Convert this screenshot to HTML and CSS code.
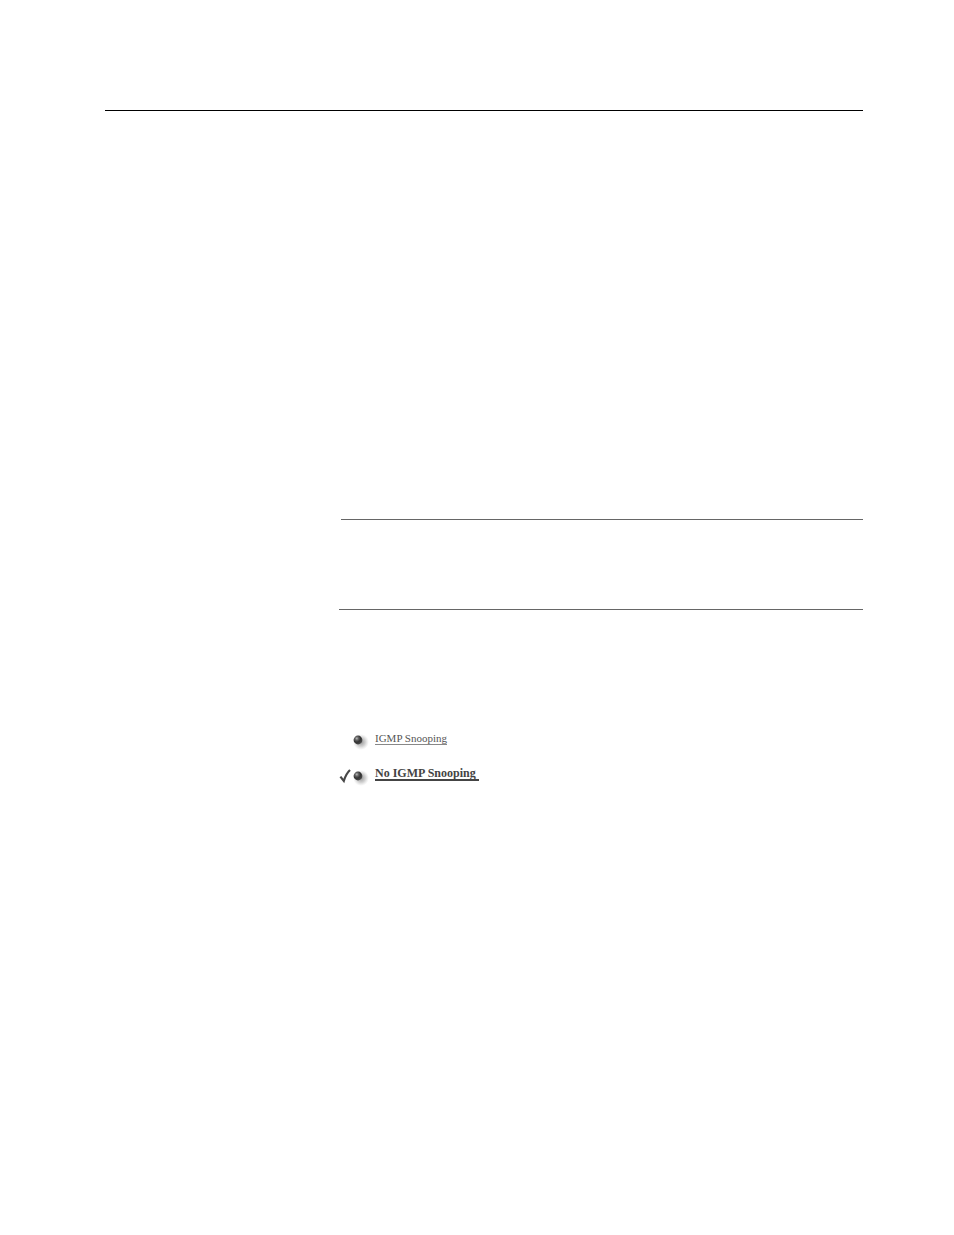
FILE: index.html
```html
<!DOCTYPE html>
<html lang="en">
<head>
  <meta charset="UTF-8" />
  <meta name="viewport" content="width=device-width, initial-scale=1" />
  <title>IGMP Snooping</title>
  <link rel="stylesheet" href="styles.css">
</head>
<body>
  <svg width="0" height="0" class="defs" aria-hidden="true">
    <defs>
      <radialGradient id="ball" cx="0.36" cy="0.32" r="0.65">
        <stop offset="0" stop-color="#bbb" />
        <stop offset="0.3" stop-color="#666" />
        <stop offset="0.65" stop-color="#333" />
        <stop offset="1" stop-color="#484848" />
      </radialGradient>
      <radialGradient id="shade">
        <stop offset="0" stop-color="#777" stop-opacity="0.8" />
        <stop offset="0.55" stop-color="#999" stop-opacity="0.45" />
        <stop offset="1" stop-color="#bbb" stop-opacity="0" />
      </radialGradient>
      <symbol id="bullet" viewBox="0 0 18 18">
        <circle cx="9" cy="9" r="8" fill="url(#shade)" />
        <circle cx="6" cy="7" r="4.4" fill="url(#ball)" />
      </symbol>
    </defs>
  </svg>
  <header class="header"></header>
  <main class="content">
    <section class="note"></section>
    <ul class="options">
      <li class="option">
        <span class="mark"></span>
        <svg class="bullet"><use href="#bullet" /></svg>
        <a href="#igmp">IGMP Snooping</a>
      </li>
      <li class="option selected">
        <svg class="mark" viewBox="0 0 12 16">
          <path d="M1.4 8.6 L4.8 13 C6 9 8 4.8 11 2" fill="none" stroke="#484848" stroke-width="2.2" />
        </svg>
        <svg class="bullet"><use href="#bullet" /></svg>
        <a href="#no-igmp">No IGMP Snooping&nbsp;</a>
      </li>
    </ul>
  </main>
</body>
</html>
```
FILE: styles.css
```css
* {
  margin: 0;
  padding: 0;
  box-sizing: border-box;
}

body {
  padding: 110px 91px 40px 105px;
  font-family: "Liberation Serif", "Times New Roman", serif;
  font-size: 11px;
  background: #fff;
  color: #555;
}

.defs {
  position: absolute;
}

.header {
  border-top: 1px solid #000;
}

.content {
  padding: 408px 0 0 234px;
}

.note {
  height: 91px;
  border-bottom: 1px solid #666;
}

/* the top rule starts a little further in than the bottom one */
.note::before {
  content: "";
  display: block;
  margin-left: 2px;
  border-top: 1px solid #666;
}

.options {
  display: grid;
  gap: 18px;
  margin-top: 122px;
  list-style: none;
}

.option {
  display: flex;
  align-items: flex-start;
  height: 18px;
}

.mark {
  width: 12px;
  height: 16px;
}

.bullet {
  width: 18px;
  height: 18px;
  margin: 1px 5px 0 1px;
}

.option a {
  color: #555;
  line-height: 12px;
  text-decoration: none;
  border-bottom: 1px solid #888;
}

.selected a {
  font-size: 12px;
  font-weight: bold;
  color: #444;
  line-height: 11px;
  border-bottom: 2px solid #444;
}
```
